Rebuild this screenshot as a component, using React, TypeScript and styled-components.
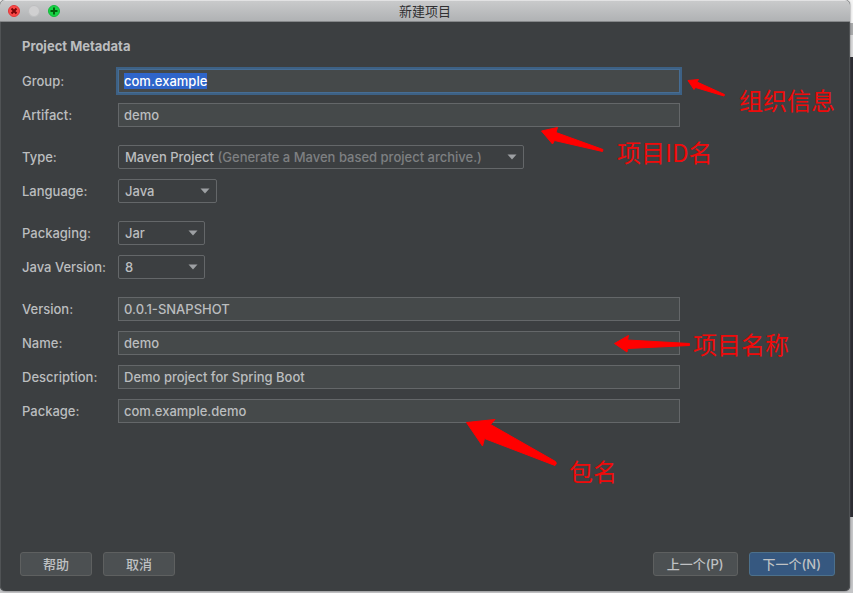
import React, { useEffect, useRef } from "react";
import styled, { createGlobalStyle, css } from "styled-components";

const uiFont = `Inter, "Noto Sans CJK SC", sans-serif`;

const GlobalStyle = createGlobalStyle`
  *, *::before, *::after { box-sizing: border-box; }
  html { min-height: 100%; background: #c4c5c7; }
  body {
    margin: 0;
    min-height: 100vh;
    background: linear-gradient(
      #f4f4f4 0 23px, #a9aaab 23px 35px, #d9d9da 35px 57px,
      #2b2b31 57px 517px, #c4c5c7 517px
    );
    font: 500 13px/16px ${uiFont};
    color: #bbbdbf;
  }
`;

const Dialog = styled.main`
  display: flex;
  flex-direction: column;
  min-height: calc(100vh - 2px);
  margin-right: 3px;
  overflow: hidden;
  background: #3c3f41;
  border-radius: 5px;
  box-shadow: inset 1px 0 #505355, inset -1px 0 #505355, 0 0 2px #55565a;
`;

const TitleBar = styled.header`
  display: grid;
  grid-template-columns: 1fr auto 1fr;
  align-items: center;
  height: 22px;
  padding: 0 8px;
  background: linear-gradient(#e2e2e3 0 1px, #c9cacb 1px, #b0b2b4);
  border-bottom: 1px solid #858789;
`;

const WindowControls = styled.div`
  display: flex;
  gap: 8px;
`;

const WindowButton = styled.button<{ $fill: string; $edge: string }>`
  display: grid;
  place-items: center;
  width: 12px;
  height: 12px;
  padding: 0;
  border: 1px solid ${(p) => p.$edge};
  border-radius: 50%;
  background: ${(p) => p.$fill};
`;

const WindowTitle = styled.h1`
  margin: 0;
  font: 400 13px/20px ${uiFont};
  color: #303032;
`;

const Form = styled.form`
  display: flex;
  flex: 1;
  flex-direction: column;
`;

const Fields = styled.div`
  display: flex;
  flex-direction: column;
  gap: 18px;
  padding: 14px 170px 24px 22px;
`;

const SectionTitle = styled.h2`
  margin: 0 0 -5px;
  font: 700 13px/20px ${uiFont};
`;

const FieldGroup = styled.div`
  display: flex;
  flex-direction: column;
  gap: 10px;
`;

const Row = styled.div`
  display: grid;
  grid-template-columns: 96px minmax(0, 1fr);
  align-items: center;
`;

const Label = styled.label`
  white-space: nowrap;
`;

const Control = styled.div`
  position: relative;
  display: flex;
`;

const TextInput = styled.input`
  width: 100%;
  height: 24px;
  padding: 0 5px;
  border: 1px solid #646769;
  border-radius: 0;
  background: #45494a;
  font: inherit;
  color: inherit;

  &:focus {
    outline: 2px solid #3d6185;
    outline-offset: 0;
    border-color: #466d94;
  }

  &::selection {
    background: #2f65ca;
    color: #ffffff;
  }
`;

const SelectFrame = styled.div<{ $width: number }>`
  display: grid;
  grid-template-columns: minmax(0, 1fr) 22px;
  align-items: center;
  width: ${(p) => p.$width}px;
  height: 24px;
  border: 1px solid #646769;
  border-radius: 2px;
`;

const Select = styled.select<{ $captioned: boolean }>`
  grid-area: 1 / 1 / 2 / 3;
  appearance: none;
  height: 22px;
  padding: 0 6px;
  border: 0;
  background: transparent;
  font: inherit;
  color: inherit;
  ${(p) =>
    p.$captioned &&
    css`
      opacity: 0;
    `}
`;

const Caption = styled.span`
  grid-area: 1 / 1;
  padding-left: 6px;
  white-space: nowrap;
  pointer-events: none;
`;

const Hint = styled.span`
  color: #7e8082;
`;

const Caret = styled.svg`
  grid-area: 1 / 2;
  justify-self: center;
  pointer-events: none;
`;

const ButtonBar = styled.footer`
  display: flex;
  justify-content: space-between;
  margin-top: auto;
  padding: 0 15px 15px 20px;
`;

const ButtonGroup = styled.div`
  display: flex;
  gap: 11px;
`;

const Button = styled.button<{ $primary?: boolean }>`
  min-width: 72px;
  height: 24px;
  padding: 0 13px;
  border: 1px solid ${(p) => (p.$primary ? "#4c708c" : "#5e6060")};
  border-radius: 3px;
  background: ${(p) => (p.$primary ? "#365880" : "#4c5052")};
  font: inherit;
  line-height: 20px;
  color: #bfc1c3;
`;

const Arrow = styled.svg<{ $x: number; $y: number }>`
  position: absolute;
  left: calc(100% + ${(p) => p.$x}px);
  top: ${(p) => p.$y}px;
  z-index: 1;
  fill: #ff0000;
  stroke: #ff0000;
  stroke-linejoin: round;
  pointer-events: none;
`;

const NoteText = styled.span<{ $x: number; $y: number }>`
  position: absolute;
  left: calc(100% + ${(p) => p.$x}px);
  top: ${(p) => p.$y}px;
  z-index: 1;
  font: 400 24px/32px "Noto Sans CJK SC", sans-serif;
  color: #f00a0a;
  white-space: nowrap;
  pointer-events: none;
`;

type Note = {
  text: string;
  textX: number;
  textY: number;
  arrowX: number;
  arrowY: number;
  width: number;
  height: number;
  path: string;
};

const notes: Record<string, Note> = {
  group: {
    text: "组织信息", textX: 59, textY: 15,
    arrowX: 6, arrowY: 8, width: 42, height: 22,
    path: "M2 3.5 L12.5 2.5 L11 5 L38.5 17.5 L38 19 L9.5 10.5 L8 12.5Z",
  },
  artifact: {
    text: "项目ID名", textX: -63, textY: 33,
    arrowX: -140, arrowY: 22, width: 66, height: 30,
    path: "M1.5 6 L17.5 2.5 L16 7.5 L63 24.5 L62.5 26.5 L14.5 15.5 L12.5 19Z",
  },
  name: {
    text: "项目名称", textX: 13, textY: -3,
    arrowX: -67, arrowY: 2, width: 80, height: 22,
    path: "M1.5 10.5 L15.5 2.5 L14.5 7 L76.5 10.5 L76.5 12.5 L14.5 15.5 L14 19Z",
  },
  package: {
    text: "包名", textX: -111, textY: 56,
    arrowX: -216, arrowY: 18, width: 96, height: 52,
    path: "M2.5 5.5 L31 2.5 L26.5 7.5 L91.5 44.5 Q93.5 46.5 91 48.5 L20.5 21.5 L18.5 29Z",
  },
};

function Annotation({ note }: { note: Note }) {
  return (
    <>
      <Arrow $x={note.arrowX} $y={note.arrowY} width={note.width} height={note.height} aria-hidden="true">
        <path d={note.path} />
      </Arrow>
      <NoteText $x={note.textX} $y={note.textY}>{note.text}</NoteText>
    </>
  );
}

function TextField({ id, label, value, note, selected = false }: {
  id: string; label: string; value: string; note?: Note; selected?: boolean;
}) {
  const input = useRef<HTMLInputElement>(null);
  useEffect(() => {
    if (selected) {
      input.current?.focus();
      input.current?.select();
    }
  }, [selected]);
  return (
    <Row>
      <Label htmlFor={id}>{label}</Label>
      <Control>
        <TextInput id={id} ref={input} defaultValue={value} spellCheck={false} />
        {note && <Annotation note={note} />}
      </Control>
    </Row>
  );
}

function SelectField({ id, label, value, hint, width }: {
  id: string; label: string; value: string; hint?: string; width: number;
}) {
  return (
    <Row>
      <Label htmlFor={id}>{label}</Label>
      <Control>
        <SelectFrame $width={width}>
          {hint && (
            <Caption aria-hidden="true">
              {value} <Hint>{hint}</Hint>
            </Caption>
          )}
          <Select id={id} $captioned={Boolean(hint)} defaultValue={value}>
            <option>{value}</option>
          </Select>
          <Caret width="10" height="6" viewBox="0 0 10 6" aria-hidden="true">
            <path d="M0.5 0.5H9.5L5 5.5Z" fill="#9da0a3" />
          </Caret>
        </SelectFrame>
      </Control>
    </Row>
  );
}

export default function App() {
  return (
    <>
      <GlobalStyle />
      <Dialog>
        <TitleBar>
          <WindowControls>
            <WindowButton type="button" aria-label="关闭" $fill="#fb4948" $edge="#e0383a">
              <svg width="8" height="8" viewBox="0 0 8 8">
                <path d="M1.5 1.5 6.5 6.5M6.5 1.5 1.5 6.5" stroke="#7a0507" strokeWidth="2" />
              </svg>
            </WindowButton>
            <WindowButton type="button" aria-label="最小化" $fill="#d0d0d1" $edge="#bebfc0" />
            <WindowButton type="button" aria-label="缩放" $fill="#17d446" $edge="#12b93b">
              <svg width="8" height="8" viewBox="0 0 8 8">
                <path d="M4 0.5V7.5M0.5 4H7.5" stroke="#04600f" strokeWidth="2" />
              </svg>
            </WindowButton>
          </WindowControls>
          <WindowTitle>新建项目</WindowTitle>
        </TitleBar>
        <Form onSubmit={(e) => e.preventDefault()}>
          <Fields>
            <SectionTitle>Project Metadata</SectionTitle>
            <FieldGroup>
              <TextField id="group" label="Group:" value="com.example" note={notes.group} selected />
              <TextField id="artifact" label="Artifact:" value="demo" note={notes.artifact} />
            </FieldGroup>
            <FieldGroup>
              <SelectField id="type" label="Type:" value="Maven Project" hint="(Generate a Maven based project archive.)" width={406} />
              <SelectField id="language" label="Language:" value="Java" width={99} />
            </FieldGroup>
            <FieldGroup>
              <SelectField id="packaging" label="Packaging:" value="Jar" width={87} />
              <SelectField id="java-version" label="Java Version:" value="8" width={87} />
            </FieldGroup>
            <FieldGroup>
              <TextField id="version" label="Version:" value="0.0.1-SNAPSHOT" />
              <TextField id="name" label="Name:" value="demo" note={notes.name} />
              <TextField id="description" label="Description:" value="Demo project for Spring Boot" />
              <TextField id="package" label="Package:" value="com.example.demo" note={notes.package} />
            </FieldGroup>
          </Fields>
          <ButtonBar>
            <ButtonGroup>
              <Button type="button">帮助</Button>
              <Button type="button">取消</Button>
            </ButtonGroup>
            <ButtonGroup>
              <Button type="button">上一个(P)</Button>
              <Button type="submit" $primary>下一个(N)</Button>
            </ButtonGroup>
          </ButtonBar>
        </Form>
      </Dialog>
    </>
  );
}
